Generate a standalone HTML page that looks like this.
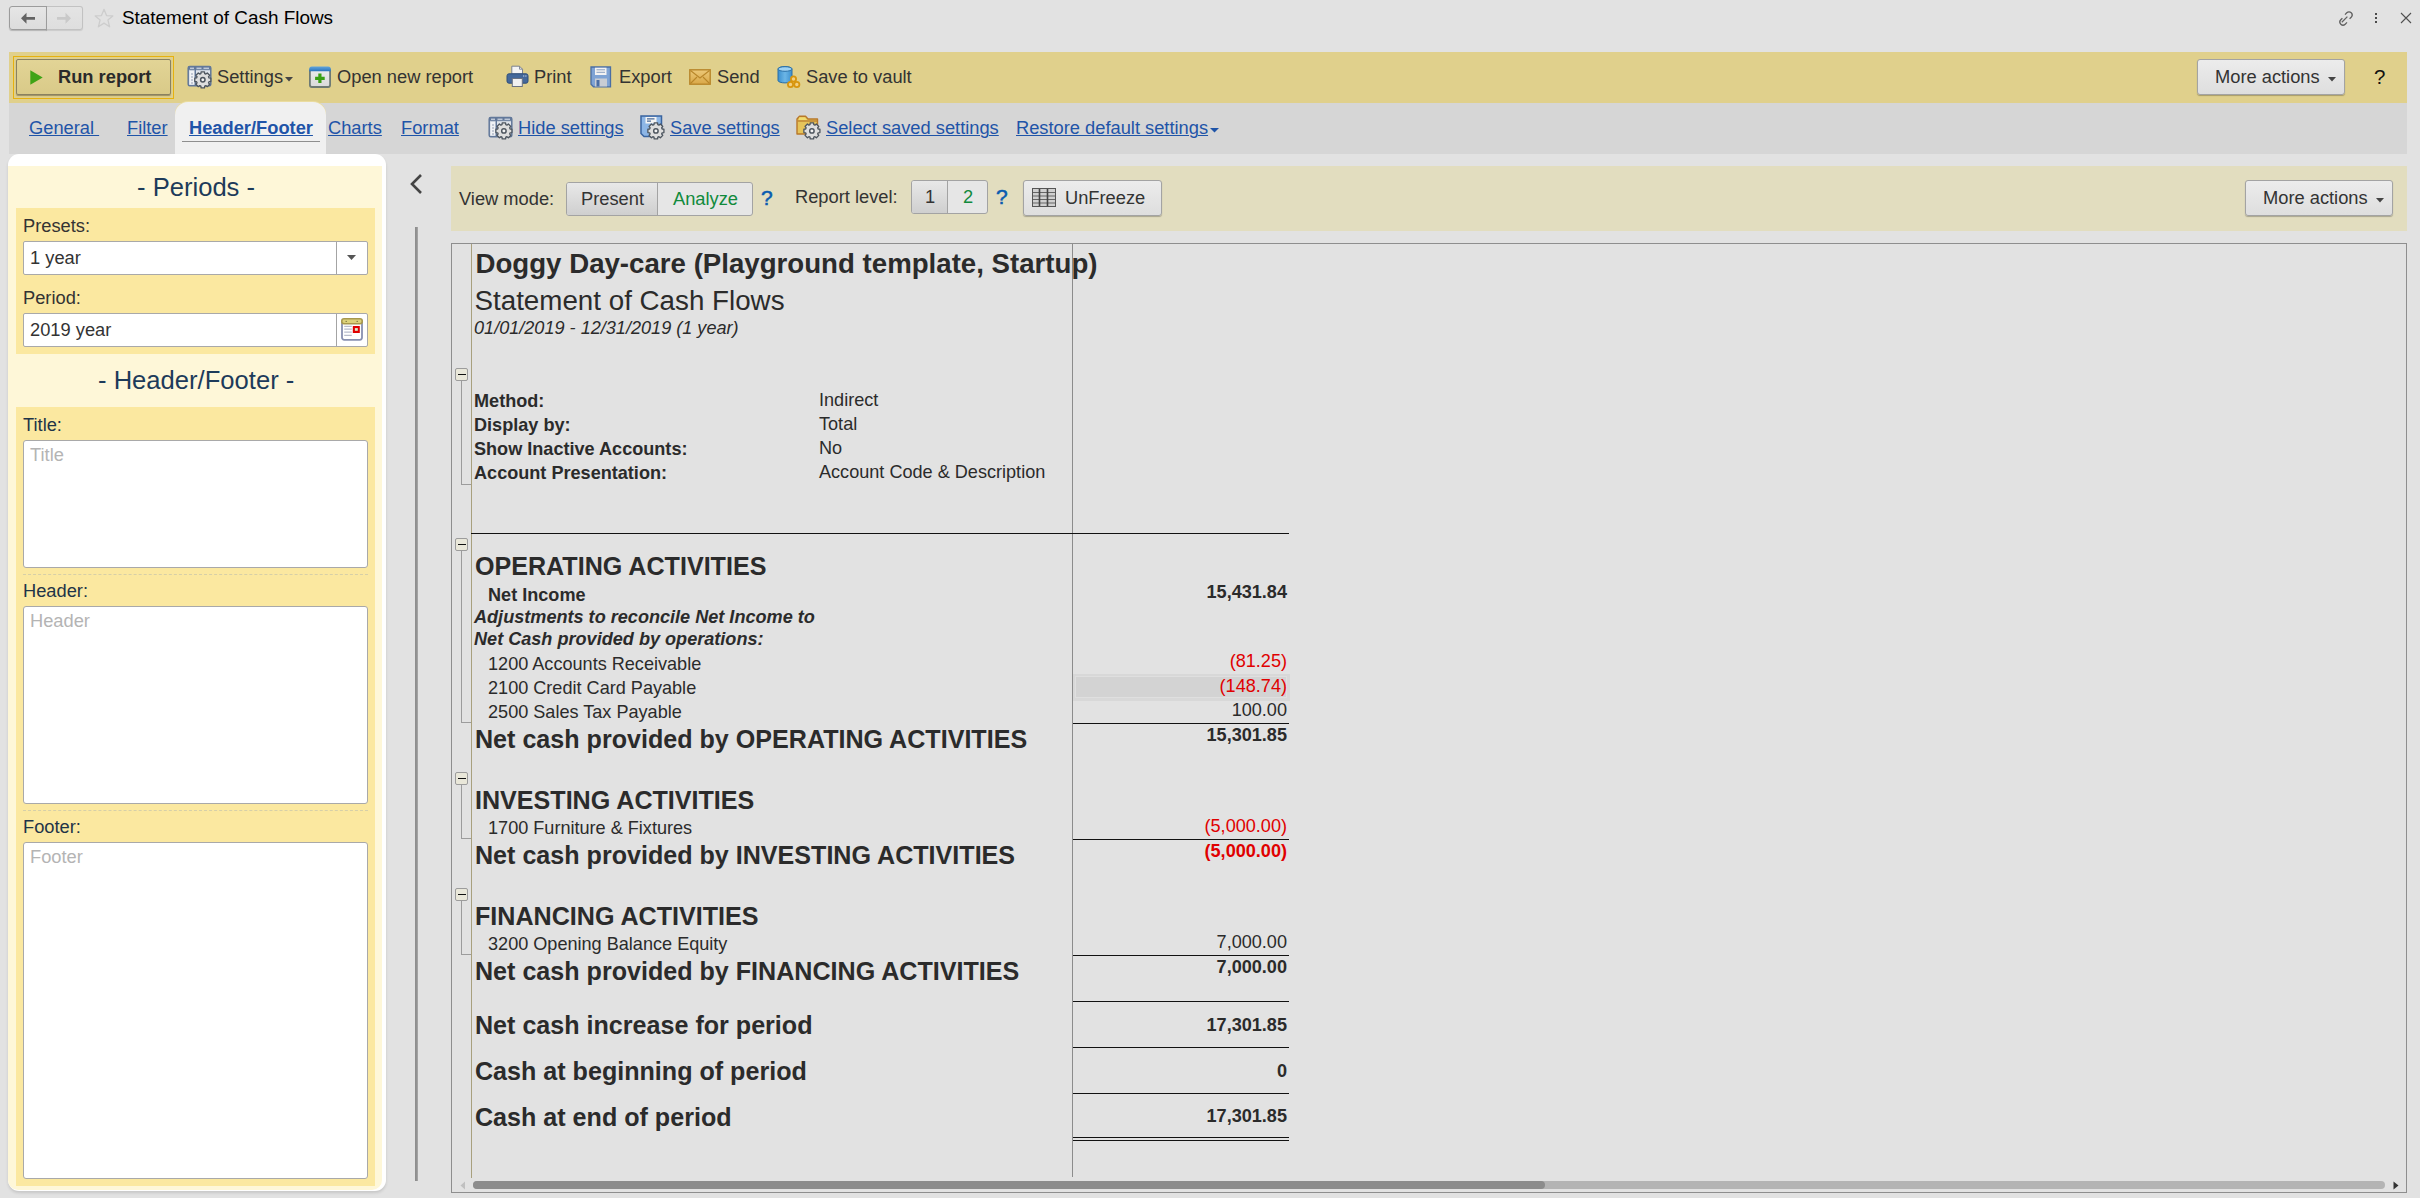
<!DOCTYPE html>
<html><head><meta charset="utf-8">
<style>
*{box-sizing:border-box;margin:0;padding:0}
html,body{width:2420px;height:1198px;overflow:hidden;background:#e2e2e2;font-family:"Liberation Sans",sans-serif;color:#333}
.a{position:absolute;white-space:nowrap;line-height:1}
.t18{font-size:18.3px}
.lnk{color:#1f54a8;text-decoration:underline;text-decoration-thickness:1px;text-underline-offset:1px}
.btn{position:absolute;border:1px solid #a3a3a3;border-radius:3px;background:linear-gradient(#ececec,#dedede);box-shadow:0 1px 1px rgba(0,0,0,.25)}
.rep{color:#2b2b2b}
.b{font-weight:bold}
.red{color:#e00000}
.hl{position:absolute;height:1px;background:#111}
.tb{position:absolute;left:455px;width:13px;height:13px;border:1px solid #9c9c9c;border-radius:2px;background:#e9e7d9}
.tb::after{content:"";position:absolute;left:1.5px;top:5px;width:8px;height:1px;background:#111}
.tv{position:absolute;left:461px;width:1px;background:#9c9c9c}
.th{position:absolute;left:461px;width:10px;height:1px;background:#9c9c9c}
</style></head><body>

<!-- title bar -->
<div class="a" style="left:9px;top:6px;width:38px;height:24px;border:1px solid #9c9c9c;border-radius:3px 0 0 3px;background:linear-gradient(#e6e6e6,#dcdcdc);box-shadow:0 1px 1px rgba(0,0,0,.2)"></div>
<div class="a" style="left:46px;top:6px;width:37px;height:24px;border:1px solid #c2c2c2;border-left:none;border-radius:0 3px 3px 0;background:linear-gradient(#e4e4e4,#dedede);box-shadow:0 1px 1px rgba(0,0,0,.1)"></div>
<div class="a" style="left:46px;top:6px;width:1px;height:24px;background:#9c9c9c"></div>
<svg class="a" style="left:20px;top:12px" width="16" height="13" viewBox="0 0 16 13"><path d="M1 6.3 L6.5 0.8 V4.9 H15 V7.7 H6.5 V11.8 Z" fill="#636363"/></svg>
<svg class="a" style="left:56px;top:12px" width="16" height="13" viewBox="0 0 16 13"><path d="M15 6.3 L9.5 0.8 V4.9 H1 V7.7 H9.5 V11.8 Z" fill="#c9c9c9"/></svg>
<svg class="a" style="left:94px;top:8px" width="20" height="21" viewBox="0 0 20 21"><path d="M10 1.3 L12.5 7.6 L18.8 7.9 L13.9 11.9 L15.6 18.8 L10 15.1 L4.4 18.8 L6.1 11.9 L1.2 7.9 L7.5 7.6 Z" fill="none" stroke="#cdcdcd" stroke-width="1.3" stroke-linejoin="round"/></svg>
<div class="a" style="left:122px;top:9px;font-size:18.9px;color:#000">Statement of Cash Flows</div>

<svg class="a" style="left:2336px;top:9px" width="20" height="20" viewBox="0 0 20 20"><g fill="none" stroke="#606060" stroke-width="1.25"><path d="M5.8 13.2 L11.4 7.6"/><path d="M9 5.6 L10.8 3.8 a3.1 3.1 0 0 1 4.4 4.4 L13.6 9.8"/><path d="M11 13.4 L9.2 15.2 a3.1 3.1 0 0 1 -4.4 -4.4 L6.4 9.2"/></g></svg>
<div class="a" style="left:2375px;top:13px;width:2.4px;height:2.4px;background:#4a4a4a"></div>
<div class="a" style="left:2375px;top:17px;width:2.4px;height:2.4px;background:#4a4a4a"></div>
<div class="a" style="left:2375px;top:21px;width:2.4px;height:2.4px;background:#4a4a4a"></div>
<svg class="a" style="left:2400px;top:12px" width="12" height="12" viewBox="0 0 12 12"><path d="M1 1 L11 11 M11 1 L1 11" stroke="#505050" stroke-width="1.1"/></svg>

<!-- toolbar -->
<div class="a" style="left:9px;top:52px;width:2398px;height:51px;background:#e0d08c"></div>
<div class="a" style="left:13px;top:56px;width:161px;height:43px;border:1.5px solid #e6b10f"></div>
<div class="a" style="left:16px;top:59px;width:155px;height:36px;border:1px solid #8a8160;border-radius:2px;background:linear-gradient(#e2d496,#d9ca88);box-shadow:0 1px 1px rgba(0,0,0,.3)"></div>
<svg class="a" style="left:30px;top:70px" width="13" height="15" viewBox="0 0 13 15"><path d="M0.3 0.3 L12.7 7.5 L0.3 14.7 Z" fill="#3fa316"/></svg>
<div class="a b" style="left:58px;top:68px;font-size:18.3px;color:#2a2a2a">Run report</div>

<!-- settings icon -->
<svg class="a" style="left:187px;top:65px" width="27" height="26" viewBox="0 0 27 26"><rect x="1.2" y="1.5" width="22.6" height="19.3" rx="1.5" fill="#c9d1dc" stroke="#62789a" stroke-width="1.5"/>
<rect x="1.2" y="1.5" width="22.6" height="3.3" fill="#62789a"/>
<path d="M3 3.2 h4 M9.5 3.2 h5 M16.5 3.2 h5.5" stroke="#e8ecf2" stroke-width="1"/>
<rect x="2.5" y="6" width="5" height="13.5" fill="#f0f2f5"/>
<rect x="9" y="6" width="14" height="13.5" fill="#dfe4eb"/>
<path d="M8.3 2 V20.5" stroke="#62789a" stroke-width="1.4"/>
<path d="M4.2 9 h1.6 M4.2 12 h1.6 M4.2 15 h1.6 M4.2 18 h1.6" stroke="#7d8aa4" stroke-width="1.2"/><g transform="translate(15.8 14.8)"><path d="M-1.90 -6.22 L-1.70 -8.02 L1.70 -8.02 L1.90 -6.22 L3.05 -5.74 L4.47 -6.88 L6.88 -4.47 L5.74 -3.05 L6.22 -1.90 L8.02 -1.70 L8.02 1.70 L6.22 1.90 L5.74 3.05 L6.88 4.47 L4.47 6.88 L3.05 5.74 L1.90 6.22 L1.70 8.02 L-1.70 8.02 L-1.90 6.22 L-3.05 5.74 L-4.47 6.88 L-6.88 4.47 L-5.74 3.05 L-6.22 1.90 L-8.02 1.70 L-8.02 -1.70 L-6.22 -1.90 L-5.74 -3.05 L-6.88 -4.47 L-4.47 -6.88 L-3.05 -5.74 Z" fill="#dedede" stroke="#4d555e" stroke-width="1.3" stroke-linejoin="round"/><circle r="2.2" fill="#f4f4f4" stroke="#4d555e" stroke-width="1.5"/></g></svg>
<div class="a" style="left:217px;top:68px;font-size:18.3px;color:#333">Settings</div>
<svg class="a" style="left:285px;top:77px" width="8" height="5" viewBox="0 0 8 5"><path d="M0 0 H8 L4 4.5 Z" fill="#444"/></svg>

<!-- open new report icon -->
<svg class="a" style="left:309px;top:66px" width="22" height="22" viewBox="0 0 22 22">
<defs><linearGradient id="nrb" x1="0" y1="0" x2="0" y2="1"><stop offset="0" stop-color="#62a6de"/><stop offset="1" stop-color="#2a74bc"/></linearGradient><linearGradient id="nrg" x1="0" y1="0" x2="0" y2="1"><stop offset="0" stop-color="#ececec"/><stop offset="1" stop-color="#dadada"/></linearGradient></defs>
<rect x="0.9" y="3" width="20.2" height="18" rx="2" fill="url(#nrg)" stroke="#6e7a74" stroke-width="1.8"/>
<path d="M0.2 5.2 V3 a2.6 2.6 0 0 1 2.6 -2.6 H19.2 a2.6 2.6 0 0 1 2.6 2.6 V5.2 Z" fill="url(#nrb)"/>
<path d="M10.9 7.6 V17 M6.1 12.3 H15.7" stroke="#3aa014" stroke-width="3.2"/>
</svg>
<div class="a" style="left:337px;top:68px;font-size:18.3px;color:#333">Open new report</div>

<!-- print -->
<svg class="a" style="left:506px;top:65px" width="23" height="23" viewBox="0 0 23 23">
<path d="M5.8 1.2 H13.5 L16.5 4.2 V9 H5.8 Z" fill="#f4f4f4" stroke="#7a8290" stroke-width="1"/>
<path d="M13.5 1.2 V4.2 H16.5" fill="none" stroke="#7a8290" stroke-width="0.9"/>
<rect x="1" y="8.8" width="21" height="9.4" rx="2" fill="#44689a" stroke="#2f4f7a" stroke-width="1"/>
<path d="M17 11 h1.3 M19.2 11 h1.3" stroke="#c8d4e4" stroke-width="1"/>
<rect x="6.3" y="13.5" width="10" height="8" fill="#f0f0f0" stroke="#6a7282" stroke-width="1"/>
</svg>
<div class="a" style="left:534px;top:68px;font-size:18.3px;color:#333">Print</div>

<!-- export -->
<svg class="a" style="left:590px;top:66px" width="22" height="22" viewBox="0 0 22 22">
<path d="M1 1 H20.5 V20.8 H3.5 L1 18.3 Z" fill="#7ea3d4" stroke="#4a6ea4" stroke-width="1.3"/>
<rect x="5" y="1.7" width="11.5" height="7.3" fill="#f2f2f2"/>
<path d="M6.5 3.8 h8.5 M6.5 6.3 h8.5" stroke="#8aa0c0" stroke-width="1"/>
<rect x="5" y="12.5" width="12" height="8" fill="#c8cdd4"/>
<rect x="6.5" y="14" width="3" height="6.5" fill="#4a6ea4"/>
</svg>
<div class="a" style="left:619px;top:68px;font-size:18.3px;color:#333">Export</div>

<!-- send -->
<svg class="a" style="left:689px;top:69px" width="22" height="16" viewBox="0 0 22 16">
<defs><linearGradient id="env" x1="0" y1="0" x2="0" y2="1"><stop offset="0" stop-color="#ecc878"/><stop offset="1" stop-color="#d9a848"/></linearGradient></defs>
<rect x="0.8" y="0.8" width="20.4" height="14.4" fill="url(#env)" stroke="#b8862a" stroke-width="1.4"/>
<path d="M1.5 1.5 L11 9 L20.5 1.5 M1.5 14.5 L8 8 M20.5 14.5 L14 8" fill="none" stroke="#b8862a" stroke-width="1.1"/>
</svg>
<div class="a" style="left:717px;top:68px;font-size:18.3px;color:#333">Send</div>

<!-- vault -->
<svg class="a" style="left:777px;top:66px" width="24" height="23" viewBox="0 0 24 23">
<defs><linearGradient id="cyl" x1="0" y1="0" x2="1" y2="0"><stop offset="0" stop-color="#3b8fce"/><stop offset="0.5" stop-color="#6cb6e6"/><stop offset="1" stop-color="#3b8fce"/></linearGradient></defs>
<path d="M1 3 a7 2.4 0 0 1 14 0 V14.5 a7 2.4 0 0 1 -14 0 Z" fill="url(#cyl)" stroke="#2a6fa6" stroke-width="1"/>
<ellipse cx="8" cy="3" rx="7" ry="2.3" fill="#9fd2f2" stroke="#2a6fa6" stroke-width="1"/>
<g fill="#f3d080" stroke="#d8960e" stroke-width="1.8"><circle cx="16.5" cy="13" r="2.6"/><circle cx="13.5" cy="18.5" r="2.6"/><circle cx="19.8" cy="18.5" r="2.6"/></g>
</svg>
<div class="a" style="left:806px;top:68px;font-size:18.3px;color:#333">Save to vault</div>

<!-- more actions -->
<div class="btn" style="left:2197px;top:59px;width:148px;height:36px"></div>
<div class="a" style="left:2215px;top:68px;font-size:18.3px;color:#333">More actions</div>
<svg class="a" style="left:2328px;top:77px" width="8" height="5" viewBox="0 0 8 5"><path d="M0 0 H8 L4 4.5 Z" fill="#444"/></svg>
<div class="a" style="left:2374px;top:67px;font-size:20.5px;color:#111">?</div>

<!-- gray tab band -->
<div class="a" style="left:9px;top:103px;width:2398px;height:51px;background:#d6d6d6"></div>
<div class="a" style="left:175px;top:102px;width:151px;height:52px;background:#f0f0f0;border-radius:13px 13px 0 0;box-shadow:0 -1px 0 #eadca0"></div>
<div class="a" style="left:182px;top:141px;width:138px;height:1px;background:#8e8e8e"></div>
<div class="a lnk" style="left:29px;top:119px;font-size:18.3px">General&nbsp;</div>
<div class="a lnk" style="left:127px;top:119px;font-size:18.3px">Filter</div>
<div class="a lnk b" style="left:189px;top:119px;font-size:18.3px">Header/Footer</div>
<div class="a lnk" style="left:328px;top:119px;font-size:18.3px">Charts</div>
<div class="a lnk" style="left:401px;top:119px;font-size:18.3px">Format</div>

<svg class="a" style="left:488px;top:116px" width="27" height="26" viewBox="0 0 27 26"><rect x="1.2" y="1.5" width="22.6" height="19.3" rx="1.5" fill="#c9d1dc" stroke="#62789a" stroke-width="1.5"/>
<rect x="1.2" y="1.5" width="22.6" height="3.3" fill="#62789a"/>
<path d="M3 3.2 h4 M9.5 3.2 h5 M16.5 3.2 h5.5" stroke="#e8ecf2" stroke-width="1"/>
<rect x="2.5" y="6" width="5" height="13.5" fill="#f0f2f5"/>
<rect x="9" y="6" width="14" height="13.5" fill="#dfe4eb"/>
<path d="M8.3 2 V20.5" stroke="#62789a" stroke-width="1.4"/>
<path d="M4.2 9 h1.6 M4.2 12 h1.6 M4.2 15 h1.6 M4.2 18 h1.6" stroke="#7d8aa4" stroke-width="1.2"/><g transform="translate(15.9 14.9)"><path d="M-1.90 -6.22 L-1.70 -8.02 L1.70 -8.02 L1.90 -6.22 L3.05 -5.74 L4.47 -6.88 L6.88 -4.47 L5.74 -3.05 L6.22 -1.90 L8.02 -1.70 L8.02 1.70 L6.22 1.90 L5.74 3.05 L6.88 4.47 L4.47 6.88 L3.05 5.74 L1.90 6.22 L1.70 8.02 L-1.70 8.02 L-1.90 6.22 L-3.05 5.74 L-4.47 6.88 L-6.88 4.47 L-5.74 3.05 L-6.22 1.90 L-8.02 1.70 L-8.02 -1.70 L-6.22 -1.90 L-5.74 -3.05 L-6.88 -4.47 L-4.47 -6.88 L-3.05 -5.74 Z" fill="#dedede" stroke="#4d555e" stroke-width="1.3" stroke-linejoin="round"/><circle r="2.2" fill="#f4f4f4" stroke="#4d555e" stroke-width="1.5"/></g></svg>
<div class="a lnk" style="left:518px;top:119px;font-size:18.3px">Hide settings</div>

<svg class="a" style="left:640px;top:115px" width="27" height="27" viewBox="0 0 27 27"><path d="M1 1 H21.5 V20 L20 21.5 H4 L1 18.5 Z" fill="#8db6e6" stroke="#3a64a0" stroke-width="1.5"/>
<rect x="5.5" y="2" width="11" height="6.5" fill="#f4f4f4"/>
<path d="M7 3.8 h7.5 M7 6.2 h4" stroke="#4a6a98" stroke-width="1.2"/><g transform="translate(15.9 15.9)"><path d="M-1.90 -6.22 L-1.70 -8.02 L1.70 -8.02 L1.90 -6.22 L3.05 -5.74 L4.47 -6.88 L6.88 -4.47 L5.74 -3.05 L6.22 -1.90 L8.02 -1.70 L8.02 1.70 L6.22 1.90 L5.74 3.05 L6.88 4.47 L4.47 6.88 L3.05 5.74 L1.90 6.22 L1.70 8.02 L-1.70 8.02 L-1.90 6.22 L-3.05 5.74 L-4.47 6.88 L-6.88 4.47 L-5.74 3.05 L-6.22 1.90 L-8.02 1.70 L-8.02 -1.70 L-6.22 -1.90 L-5.74 -3.05 L-6.88 -4.47 L-4.47 -6.88 L-3.05 -5.74 Z" fill="#dedede" stroke="#4d555e" stroke-width="1.3" stroke-linejoin="round"/><circle r="2.2" fill="#f4f4f4" stroke="#4d555e" stroke-width="1.5"/></g></svg>
<div class="a lnk" style="left:670px;top:119px;font-size:18.3px">Save settings</div>

<svg class="a" style="left:796px;top:115px" width="27" height="27" viewBox="0 0 27 27"><path d="M1 4 L3.5 1.2 H9.5 L12 4 H21.5 V19 H1 Z" fill="#e6c45a" stroke="#b8782a" stroke-width="1.4" stroke-linejoin="round"/>
<path d="M1.7 6 H21" stroke="#b8782a" stroke-width="1.2"/>
<path d="M3 2.5 H9 L11 5 H3 Z" fill="#f0dc70"/><g transform="translate(15.9 15.9)"><path d="M-1.90 -6.22 L-1.70 -8.02 L1.70 -8.02 L1.90 -6.22 L3.05 -5.74 L4.47 -6.88 L6.88 -4.47 L5.74 -3.05 L6.22 -1.90 L8.02 -1.70 L8.02 1.70 L6.22 1.90 L5.74 3.05 L6.88 4.47 L4.47 6.88 L3.05 5.74 L1.90 6.22 L1.70 8.02 L-1.70 8.02 L-1.90 6.22 L-3.05 5.74 L-4.47 6.88 L-6.88 4.47 L-5.74 3.05 L-6.22 1.90 L-8.02 1.70 L-8.02 -1.70 L-6.22 -1.90 L-5.74 -3.05 L-6.88 -4.47 L-4.47 -6.88 L-3.05 -5.74 Z" fill="#dedede" stroke="#4d555e" stroke-width="1.3" stroke-linejoin="round"/><circle r="2.2" fill="#f4f4f4" stroke="#4d555e" stroke-width="1.5"/></g></svg>
<div class="a lnk" style="left:826px;top:119px;font-size:18.3px">Select saved settings</div>
<div class="a lnk" style="left:1016px;top:119px;font-size:18.3px">Restore default settings</div>
<svg class="a" style="left:1210px;top:128px" width="9" height="5" viewBox="0 0 9 5"><path d="M0 0 H9 L4.5 4.5 Z" fill="#1f54a8"/></svg>

<!-- left panel -->
<div class="a" style="left:8px;top:154px;width:378px;height:1037px;background:#fff;border-radius:11px;box-shadow:0 2px 3px rgba(0,0,0,.12)"></div>
<div class="a" style="left:8px;top:166px;width:374px;height:1024px;background:#fef7d8;border-radius:0 0 10px 10px"></div>
<div class="a" style="left:16px;top:208px;width:359px;height:146px;background:#fbe8a0"></div>
<div class="a" style="left:16px;top:407px;width:359px;height:779px;background:#fbe8a0"></div>
<div class="a" style="left:137px;top:175px;font-size:25.6px;color:#1d3b5a">- Periods -</div>
<div class="a" style="left:23px;top:217px;font-size:18.3px;color:#333">Presets:</div>
<div class="a" style="left:23px;top:241px;width:345px;height:34px;background:#fff;border:1px solid #a9a9a9;border-radius:2px"></div>
<div class="a" style="left:336px;top:242px;width:1px;height:32px;background:#a4a4a4"></div>
<svg class="a" style="left:347px;top:255px" width="9" height="5" viewBox="0 0 9 5"><path d="M0 0 H9 L4.5 5 Z" fill="#555"/></svg>
<div class="a" style="left:30px;top:249px;font-size:18.3px;color:#333">1 year</div>
<div class="a" style="left:23px;top:289px;font-size:18.3px;color:#333">Period:</div>
<div class="a" style="left:23px;top:313px;width:345px;height:34px;background:#fff;border:1px solid #a9a9a9;border-radius:2px"></div>
<div class="a" style="left:336px;top:314px;width:1px;height:32px;background:#a4a4a4"></div>
<svg class="a" style="left:341px;top:318px" width="22" height="23" viewBox="0 0 22 23">
<rect x="1" y="2" width="20" height="19.8" rx="2.2" fill="#fff" stroke="#8890b0" stroke-width="1.8"/>
<rect x="0.8" y="0.8" width="20.4" height="5" rx="2.2" fill="#dcd27a" stroke="#a8984c" stroke-width="1.6"/>
<path d="M4.5 3.4 h1.5 M15.5 3.4 h1.5" stroke="#7a7040" stroke-width="0.9"/>
<path d="M3.2 8.3 H10.8 M3.2 11.2 H10.8 M3.2 14.2 H10.8 M3.2 17.3 H10.8" stroke="#b8bccb" stroke-width="1.2"/>
<rect x="11.8" y="8" width="7" height="7" fill="#e00000"/>
<rect x="13.9" y="10.1" width="2.9" height="2.7" fill="#d8f0d0"/>
</svg>
<div class="a" style="left:30px;top:321px;font-size:18.3px;color:#333">2019 year</div>
<div class="a" style="left:98px;top:368px;font-size:25.6px;color:#1d3b5a">- Header/Footer -</div>

<div class="a" style="left:23px;top:416px;font-size:18.3px;color:#1f3448">Title:</div>
<div class="a" style="left:23px;top:440px;width:345px;height:128px;background:#fff;border:1px solid #a9a9a9;border-radius:3px"></div>
<div class="a" style="left:30px;top:446px;font-size:18.3px;color:#b4b4b4">Title</div>
<div class="a" style="left:23px;top:574px;width:345px;height:0;border-top:1px dashed #d6cfa8"></div>
<div class="a" style="left:23px;top:582px;font-size:18.3px;color:#1f3448">Header:</div>
<div class="a" style="left:23px;top:606px;width:345px;height:198px;background:#fff;border:1px solid #a9a9a9;border-radius:3px"></div>
<div class="a" style="left:30px;top:612px;font-size:18.3px;color:#b4b4b4">Header</div>
<div class="a" style="left:23px;top:810px;width:345px;height:0;border-top:1px dashed #d6cfa8"></div>
<div class="a" style="left:23px;top:818px;font-size:18.3px;color:#1f3448">Footer:</div>
<div class="a" style="left:23px;top:842px;width:345px;height:337px;background:#fff;border:1px solid #a9a9a9;border-radius:3px"></div>
<div class="a" style="left:30px;top:848px;font-size:18.3px;color:#b4b4b4">Footer</div>

<!-- splitter -->
<svg class="a" style="left:408px;top:173px" width="17" height="22" viewBox="0 0 17 22"><path d="M13 2 L4 11 L13 20" fill="none" stroke="#444" stroke-width="2.6"/></svg>
<div class="a" style="left:415px;top:227px;width:3px;height:954px;background:linear-gradient(90deg,#8c8c8c,#929292 50%,#ababab)"></div>


<!-- report settings bar -->
<div class="a" style="left:451px;top:166px;width:1956px;height:65px;background:#e2ddbf"></div>
<div class="a" style="left:459px;top:190px;font-size:18.3px;color:#333">View mode:</div>
<div class="a" style="left:566px;top:182px;width:187px;height:34px;border:1px solid #a3a3a3;border-radius:3px;background:#e6e6e6;overflow:hidden">
  <div class="a" style="left:0;top:0;width:91px;height:32px;background:linear-gradient(#e8e8e8,#cfcfcf);border-right:1px solid #a3a3a3"></div>
</div>
<div class="a" style="left:581px;top:190px;font-size:18.3px;color:#333">Present</div>
<div class="a" style="left:673px;top:190px;font-size:18.3px;color:#118a3c">Analyze</div>
<div class="a" style="left:761px;top:187px;font-size:21px;color:#0a5cb0;-webkit-text-stroke:0.5px #0a5cb0">?</div>
<div class="a" style="left:795px;top:188px;font-size:18.3px;color:#333">Report level:</div>
<div class="a" style="left:911px;top:180px;width:77px;height:34px;border:1px solid #a3a3a3;border-radius:3px;background:#e6e6e6;overflow:hidden">
  <div class="a" style="left:0;top:0;width:36px;height:32px;background:linear-gradient(#e8e8e8,#cfcfcf);border-right:1px solid #a3a3a3"></div>
</div>
<div class="a" style="left:925px;top:188px;font-size:18.3px;color:#333">1</div>
<div class="a" style="left:963px;top:188px;font-size:18.3px;color:#118a3c">2</div>
<div class="a" style="left:996px;top:186px;font-size:21px;color:#0a5cb0;-webkit-text-stroke:0.5px #0a5cb0">?</div>
<div class="btn" style="left:1023px;top:180px;width:139px;height:36px"></div>
<svg class="a" style="left:1032px;top:188px" width="24" height="19" viewBox="0 0 24 19">
<rect x="0.5" y="0.5" width="23" height="18" fill="#d0d0d0" stroke="#555" stroke-width="1"/>
<path d="M1 4.5 H23 M1 8 H23 M1 11.5 H23 M1 15 H23" stroke="#666" stroke-width="1"/>
<path d="M7.5 1 V18 M15.5 1 V18" stroke="#444" stroke-width="1.6"/>
</svg>
<div class="a" style="left:1065px;top:189px;font-size:18.3px;color:#333">UnFreeze</div>
<div class="btn" style="left:2245px;top:180px;width:148px;height:36px"></div>
<div class="a" style="left:2263px;top:189px;font-size:18.3px;color:#333">More actions</div>
<svg class="a" style="left:2376px;top:198px" width="8" height="5" viewBox="0 0 8 5"><path d="M0 0 H8 L4 4.5 Z" fill="#444"/></svg>

<!-- report frame -->
<div class="a" style="left:451px;top:243px;width:1956px;height:950px;border:1px solid #8e8e8e"></div>
<div class="a" style="left:471px;top:244px;width:1px;height:934px;background:#a8a07e"></div>
<div class="a" style="left:1072px;top:244px;width:1px;height:933px;background:#8c8c8c"></div>

<!-- scrollbar -->
<svg class="a" style="left:459px;top:1181px" width="8" height="9" viewBox="0 0 8 9"><path d="M6 0.5 L1.5 4.5 L6 8.5 Z" fill="#c0c0c0"/></svg>
<div class="a" style="left:473px;top:1181px;width:1912px;height:8px;border-radius:4px;background:#b4b4b4"></div>
<div class="a" style="left:473px;top:1181px;width:1072px;height:8px;border-radius:4px;background:#8c8c8c"></div>
<svg class="a" style="left:2392px;top:1181px" width="8" height="9" viewBox="0 0 8 9"><path d="M1.5 0.5 L6.5 4.5 L1.5 8.5 Z" fill="#333"/></svg>

<div class="rep">
<div class="a b" style="left:475.5px;top:250px;font-size:27.65px">Doggy Day-care (Playground template, Startup)</div>
<div class="a" style="left:474.5px;top:287px;font-size:27.75px">Statement of Cash Flows</div>
<div class="a" style="left:474px;top:319px;font-size:18.1px;font-style:italic">01/01/2019 - 12/31/2019 (1 year)</div>

<div class="a b" style="left:474px;top:392px;font-size:18.1px">Method:</div>
<div class="a b" style="left:474px;top:416px;font-size:18.1px">Display by:</div>
<div class="a b" style="left:474px;top:440px;font-size:18.1px">Show Inactive Accounts:</div>
<div class="a b" style="left:474px;top:464px;font-size:18.1px">Account Presentation:</div>
<div class="a" style="left:819px;top:391px;font-size:18.1px">Indirect</div>
<div class="a" style="left:819px;top:415px;font-size:18.1px">Total</div>
<div class="a" style="left:819px;top:439px;font-size:18.1px">No</div>
<div class="a" style="left:819px;top:463px;font-size:18.1px">Account Code &amp; Description</div>
<div class="hl" style="left:471px;top:533px;width:818px"></div>

<div class="a b" style="left:475px;top:554px;font-size:25.1px">OPERATING ACTIVITIES</div>
<div class="a b" style="left:488px;top:586px;font-size:18.1px">Net Income</div>
<div class="a b" style="left:474px;top:608px;font-size:18.1px;font-style:italic">Adjustments to reconcile Net Income to</div>
<div class="a b" style="left:474px;top:630px;font-size:18.1px;font-style:italic">Net Cash provided by operations:</div>
<div class="a" style="left:488px;top:655px;font-size:18.1px">1200 Accounts Receivable</div>
<div class="a" style="left:488px;top:679px;font-size:18.1px">2100 Credit Card Payable</div>
<div class="a" style="left:488px;top:703px;font-size:18.1px">2500 Sales Tax Payable</div>
<div class="a b" style="left:475px;top:727px;font-size:25.1px">Net cash provided by OPERATING ACTIVITIES</div>

<div class="a b" style="left:475px;top:788px;font-size:25.1px">INVESTING ACTIVITIES</div>
<div class="a" style="left:488px;top:819px;font-size:18.1px">1700 Furniture &amp; Fixtures</div>
<div class="a b" style="left:475px;top:843px;font-size:25.1px">Net cash provided by INVESTING ACTIVITIES</div>

<div class="a b" style="left:475px;top:904px;font-size:25.1px">FINANCING ACTIVITIES</div>
<div class="a" style="left:488px;top:935px;font-size:18.1px">3200 Opening Balance Equity</div>
<div class="a b" style="left:475px;top:959px;font-size:25.1px">Net cash provided by FINANCING ACTIVITIES</div>

<div class="a b" style="left:475px;top:1013px;font-size:25.1px">Net cash increase for period</div>
<div class="a b" style="left:475px;top:1059px;font-size:25.1px">Cash at beginning of period</div>
<div class="a b" style="left:475px;top:1105px;font-size:25.1px">Cash at end of period</div>

<!-- values -->
<div class="a" style="left:1073px;top:674px;width:217px;height:27px;background:#d8d8d8"></div>
<div class="a" style="left:1075px;top:676px;width:212px;height:22px;background:#d3d3d3;border:1px solid #dfdfdf"></div>
<div class="a b" style="right:1133px;top:583px;font-size:18.1px">15,431.84</div>
<div class="a red" style="right:1133px;top:652px;font-size:18.1px">(81.25)</div>
<div class="a red" style="right:1133px;top:677px;font-size:18.1px">(148.74)</div>
<div class="a" style="right:1133px;top:701px;font-size:18.1px">100.00</div>
<div class="hl" style="left:1073px;top:723px;width:216px"></div>
<div class="a b" style="right:1133px;top:726px;font-size:18.1px">15,301.85</div>
<div class="a red" style="right:1133px;top:817px;font-size:18.1px">(5,000.00)</div>
<div class="hl" style="left:1073px;top:839px;width:216px"></div>
<div class="a b red" style="right:1133px;top:842px;font-size:18.1px">(5,000.00)</div>
<div class="a" style="right:1133px;top:933px;font-size:18.1px">7,000.00</div>
<div class="hl" style="left:1073px;top:955px;width:216px"></div>
<div class="a b" style="right:1133px;top:958px;font-size:18.1px">7,000.00</div>
<div class="hl" style="left:1073px;top:1001px;width:216px"></div>
<div class="a b" style="right:1133px;top:1016px;font-size:18.1px">17,301.85</div>
<div class="hl" style="left:1073px;top:1047px;width:216px"></div>
<div class="a b" style="right:1133px;top:1062px;font-size:18.1px">0</div>
<div class="hl" style="left:1073px;top:1093px;width:216px"></div>
<div class="a b" style="right:1133px;top:1107px;font-size:18.1px">17,301.85</div>
<div class="hl" style="left:1073px;top:1137px;width:216px"></div>
<div class="hl" style="left:1073px;top:1140px;width:216px"></div>
</div>

<!-- tree -->
<div class="tb" style="top:368px"></div><div class="tv" style="top:381px;height:104px"></div><div class="th" style="top:484px"></div>
<div class="tb" style="top:538px"></div><div class="tv" style="top:551px;height:172px"></div><div class="th" style="top:722px"></div>
<div class="tb" style="top:772px"></div><div class="tv" style="top:785px;height:54px"></div><div class="th" style="top:838px"></div>
<div class="tb" style="top:888px"></div><div class="tv" style="top:901px;height:54px"></div><div class="th" style="top:954px"></div>

</body></html>
